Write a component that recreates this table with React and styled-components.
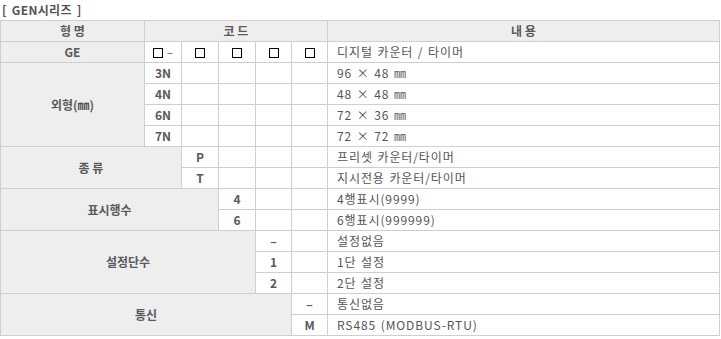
import React from 'react';
import styled, { createGlobalStyle } from 'styled-components';

const GlobalStyle = createGlobalStyle`
  body {
    margin: 0;
    background: #fff;
    font-family: "Noto Sans CJK KR", "Noto Sans", sans-serif;
    font-size: 12px;
    color: #555;
  }
`;

const Wrap = styled.div`
  width: 721px;
`;

const Title = styled.div`
  height: 20px;
  line-height: 20px;
  padding-left: 2px;
  font-weight: bold;
  color: #555;
  font-size: 12px;
  letter-spacing: 0.3px;
  word-spacing: 2px;
`;

const Table = styled.table`
  width: 720px;
  border-collapse: collapse;
  table-layout: fixed;
  border: 1px solid #ccc;
`;

const Row = styled.tr`
  height: 21px;
`;

const Cell = styled.td`
  height: 20px;
  padding: 0;
  border: 1px solid #cfcfcf;
  font-size: 12px;
  line-height: 20px;
  text-align: ${p => (p.$left ? 'left' : 'center')};
  padding-left: ${p => (p.$left ? '9px' : '0')};
  font-weight: ${p => (p.$bold ? 'bold' : 'normal')};
  letter-spacing: ${p => (p.$left ? '0.9px' : '0')};
  word-spacing: ${p => (p.$left ? '1px' : '0')};
  background: ${p => (p.$label ? '#eeeeee' : '#fff')};
  color: ${p => (p.$bold ? '#5a5a5a' : '#555')};
  white-space: nowrap;
  overflow: hidden;
`;

const Box = styled.span`
  display: inline-block;
  width: 8px;
  height: 8px;
  border: 1px solid #000;
  vertical-align: -1px;
`;

const Dash = styled.span`
  margin-left: 4px;
  color: #666;
  font-weight: normal;
`;

const Unit = styled.span`
  display: inline-block;
  font-family: "Noto Sans CJK JP", "Noto Sans CJK KR", sans-serif;
  font-size: 12px;
  line-height: 12px;
  color: #555;
  letter-spacing: 0;
  font-weight: ${p => (p.$bold ? 'bold' : 'normal')};
`;

const Label = (props) => <Cell $label $bold {...props} />;
const Code = (props) => <Cell $bold {...props} />;
const Text = (props) => <Cell $left {...props} />;
const Empty = ({ n }) => Array.from({ length: n }, (_, i) => <Cell key={i} />);

const App = () => {
  return (
    <Wrap>
      <GlobalStyle />
      <Title>[ GEN시리즈 ]</Title>
      <Table>
        <colgroup>
          <col style={{ width: 144 }} />
          <col style={{ width: 37 }} />
          <col style={{ width: 37 }} />
          <col style={{ width: 37 }} />
          <col style={{ width: 36 }} />
          <col style={{ width: 36 }} />
          <col />
        </colgroup>
        <tbody>
          <Row>
            <Label>형 명</Label>
            <Label colSpan={5}>코 드</Label>
            <Label>내 용</Label>
          </Row>
          <Row>
            <Label>GE</Label>
            <Code><Box /><Dash>–</Dash></Code>
            <Code><Box /></Code>
            <Code><Box /></Code>
            <Code><Box /></Code>
            <Code><Box /></Code>
            <Text>디지털 카운터 / 타이머</Text>
          </Row>

          <Row>
            <Label rowSpan={4}>외형(<Unit $bold>㎜</Unit>)</Label>
            <Code>3N</Code>
            <Empty n={4} />
            <Text>96 × 48 <Unit>㎜</Unit></Text>
          </Row>
          <Row>
            <Code>4N</Code>
            <Empty n={4} />
            <Text>48 × 48 <Unit>㎜</Unit></Text>
          </Row>
          <Row>
            <Code>6N</Code>
            <Empty n={4} />
            <Text>72 × 36 <Unit>㎜</Unit></Text>
          </Row>
          <Row>
            <Code>7N</Code>
            <Empty n={4} />
            <Text>72 × 72 <Unit>㎜</Unit></Text>
          </Row>

          <Row>
            <Label rowSpan={2} colSpan={2}>종 류</Label>
            <Code>P</Code>
            <Empty n={3} />
            <Text>프리셋 카운터/타이머</Text>
          </Row>
          <Row>
            <Code>T</Code>
            <Empty n={3} />
            <Text>지시전용 카운터/타이머</Text>
          </Row>

          <Row>
            <Label rowSpan={2} colSpan={3}>표시행수</Label>
            <Code>4</Code>
            <Empty n={2} />
            <Text>4행표시(9999)</Text>
          </Row>
          <Row>
            <Code>6</Code>
            <Empty n={2} />
            <Text>6행표시(999999)</Text>
          </Row>

          <Row>
            <Label rowSpan={3} colSpan={4}>설정단수</Label>
            <Code>–</Code>
            <Empty n={1} />
            <Text>설정없음</Text>
          </Row>
          <Row>
            <Code>1</Code>
            <Empty n={1} />
            <Text>1단 설정</Text>
          </Row>
          <Row>
            <Code>2</Code>
            <Empty n={1} />
            <Text>2단 설정</Text>
          </Row>

          <Row>
            <Label rowSpan={2} colSpan={5}>통신</Label>
            <Code>–</Code>
            <Text>통신없음</Text>
          </Row>
          <Row>
            <Code>M</Code>
            <Text>RS485 (MODBUS-RTU)</Text>
          </Row>
        </tbody>
      </Table>
    </Wrap>
  );
};

export default App;
